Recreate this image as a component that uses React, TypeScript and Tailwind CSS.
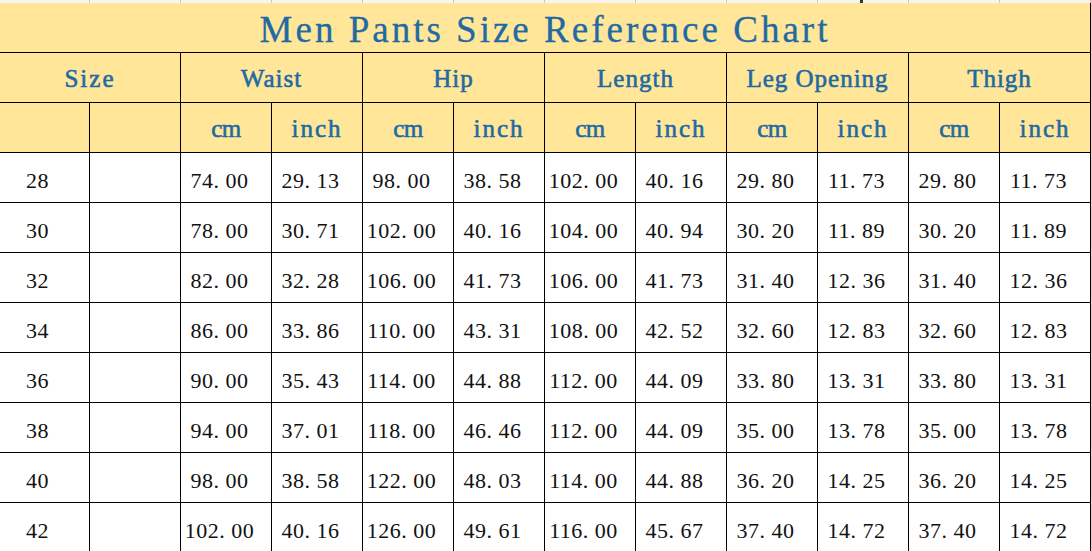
import React from "react";

const rows: [string, string[]][] = [
  ["28", ["74.00", "29.13", "98.00", "38.58", "102.00", "40.16", "29.80", "11.73", "29.80", "11.73"]],
  ["30", ["78.00", "30.71", "102.00", "40.16", "104.00", "40.94", "30.20", "11.89", "30.20", "11.89"]],
  ["32", ["82.00", "32.28", "106.00", "41.73", "106.00", "41.73", "31.40", "12.36", "31.40", "12.36"]],
  ["34", ["86.00", "33.86", "110.00", "43.31", "108.00", "42.52", "32.60", "12.83", "32.60", "12.83"]],
  ["36", ["90.00", "35.43", "114.00", "44.88", "112.00", "44.09", "33.80", "13.31", "33.80", "13.31"]],
  ["38", ["94.00", "37.01", "118.00", "46.46", "112.00", "44.09", "35.00", "13.78", "35.00", "13.78"]],
  ["40", ["98.00", "38.58", "122.00", "48.03", "114.00", "44.88", "36.20", "14.25", "36.20", "14.25"]],
  ["42", ["102.00", "40.16", "126.00", "49.61", "116.00", "45.67", "37.40", "14.72", "37.40", "14.72"]],
];

const groups = ["Waist", "Hip", "Length", "Leg Opening", "Thigh"];

function Num({ v }: { v: string }) {
  const [a, b] = v.split(".");
  return (
    <span className="whitespace-nowrap tracking-[0.5px]">
      {a}
      <span className="inline-block w-[12px] text-left">.</span>
      {b}
    </span>
  );
}

const head =
  "h-[50px] bg-[#ffe699] border-r border-b border-black flex items-center justify-center pt-[2px] text-[25px] leading-none [-webkit-text-stroke:0.6px_#1f6aa3]";

export default function App() {
  const serif = { fontFamily: '"Liberation Serif", "Times New Roman", serif' };
  return (
    <div className="w-[1091px] h-[551px] overflow-hidden bg-white" style={serif}>
      {/* previous row remnant */}
      <div className="grid grid-cols-[90px_repeat(11,91px)] h-[3px] bg-[#f7f5ee]">
        {Array.from({ length: 12 }).map((_, i) => (
          <div key={i} className="border-r border-[#c9c9c9] h-full flex">
            {i === 9 && <span className="ml-[42px] w-[3px] h-[3px] bg-[#333]" />}
          </div>
        ))}
      </div>
      <div className="grid grid-cols-[90px_repeat(11,91px)] text-[#1f6aa3]">
        {/* Title */}
        <div className="col-span-12 h-[50px] bg-[#ffe699] border-r border-b border-black flex items-center justify-center pt-[4px] text-[37px] leading-none tracking-[3px] [-webkit-text-stroke:0.3px_#1f6aa3]">
          Men Pants Size Reference Chart
        </div>
        {/* Group header */}
        <div className={`col-span-2 ${head} tracking-[2px]`}>Size</div>
        {groups.map((g) => (
          <div key={g} className={`col-span-2 ${head} tracking-[1px]`}>
            {g}
          </div>
        ))}
        {/* Unit header */}
        <div className="h-[50px] bg-[#ffe699] border-r border-b border-black" />
        <div className="h-[50px] bg-[#ffe699] border-r border-b border-black" />
        {groups.map((g) => (
          <React.Fragment key={g}>
            <div className={`${head} tracking-[-0.5px]`}>cm</div>
            <div className={`${head} tracking-[2px]`}>inch</div>
          </React.Fragment>
        ))}
        {/* Data */}
        {rows.map(([size, vals]) => (
          <React.Fragment key={size}>
            <div className="h-[50px] border-r border-b border-black flex items-center pl-[26px] pt-[6px] text-[22px] leading-none text-[#111] tracking-[0.5px]">
              {size}
            </div>
            <div className="h-[50px] border-r border-b border-black" />
            {vals.map((v, i) => (
              <div
                key={i}
                className="h-[50px] border-r border-b border-black flex items-center justify-center pr-[13px] pt-[6px] text-[22px] leading-none text-[#111]"
              >
                <Num v={v} />
              </div>
            ))}
          </React.Fragment>
        ))}
      </div>
    </div>
  );
}
